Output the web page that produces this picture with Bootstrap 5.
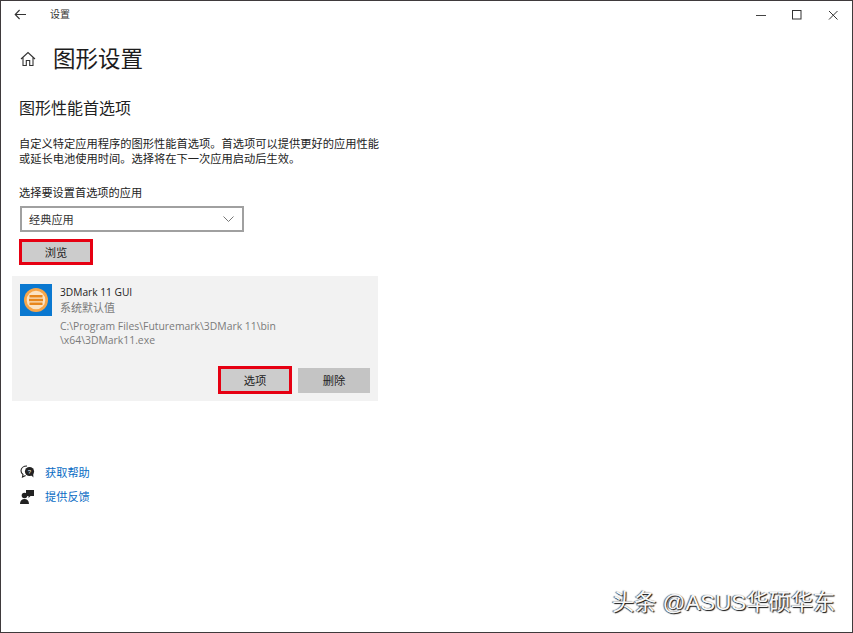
<!DOCTYPE html>
<html lang="zh-CN">
<head>
<meta charset="utf-8">
<title>设置</title>
<link href="https://cdn.jsdelivr.net/npm/bootstrap@5.3.0/dist/css/bootstrap.min.css" rel="stylesheet">
<style>
html,body{height:100%;}
body{font-family:"Open Sans","Noto Sans CJK SC",sans-serif;color:#222;background:#fff;overflow:hidden;font-size:11px;line-height:15px;}
.win{width:853px;height:633px;border:1px solid #3f3a3c;position:relative;background:#fff;}
.tbar{height:27px;}
.backbtn{width:49px;padding-left:13px;}
.tbar-title{font-size:10px;color:#333;}
.ctrls{width:108px;margin-right:1px;}
.ctrls span{width:36px;}
.main{padding-left:18px;width:378px;}
.hd{height:34px;margin-top:14px;margin-left:1px;}
.hd svg{margin-right:17px;}
.ttl{font-size:22.5px;line-height:34px;color:#1c1c1c;font-weight:400;margin:0;}
.sub{font-size:16px;line-height:22px;margin:21px 0 0;font-weight:400;color:#222;}
.desc{margin:17px 0 0;width:361px;font-size:11.25px;}
.lbl{margin:19px 0 0;font-size:11.2px;line-height:16px;}
.combo{width:224px;height:26px;border:2px solid #a0a0a0;margin:5px 0 0 1px;padding:0 8px 0 7px;font-size:11.2px;color:#333;}
.gbtn{background:#ccc;font-size:11.3px;color:#222;}
.mark-red{border:3px solid #e60012;}
.browse{width:74px;height:26px;margin:7px 0 0 0;}
.item{width:366px;height:125px;background:#f2f2f2;margin:11px 0 0 -7px;padding:8px 8px 0 8px;}
.appicon{width:32px;height:32px;flex:none;background:#0a78d0;margin-right:8px;}
.aname{font-size:10.2px;line-height:16px;color:#222;}
.amuted{font-size:10.4px;line-height:14px;color:#7a7a7a;}
.asys{font-size:11px;line-height:16px;margin-bottom:3px;}
.acts{margin-top:19px;}
.opt{width:74px;height:28px;margin-right:6px;}
.del{width:72px;height:25px;background:#c4c4c4;}
.links{margin-top:59px;}
.lnk{height:24.5px;margin-left:1px;}
.lnk svg{width:16px;margin-right:9px;flex:none;}
.lnk span{color:#0a6cc4;font-size:11.2px;}
.wm{position:absolute;left:611px;top:589px;font-family:"Liberation Sans","Noto Sans CJK SC",sans-serif;font-size:22.3px;line-height:26px;color:#f8f8f8;text-shadow:1px 1px 1px #111,-1px 0 1px #555;white-space:nowrap;}
</style>
</head>
<body>
<div class="win">
  <div class="tbar d-flex align-items-center">
    <div class="backbtn d-flex align-items-center">
      <svg width="13" height="11" viewBox="0 0 13 11" fill="none" stroke="#333" stroke-width="1.1"><path d="M12 5.500H1.200M5.600 1 1.200 5.500 5.600 10"/></svg>
    </div>
    <div class="tbar-title">设置</div>
    <div class="ctrls ms-auto d-flex align-items-center">
      <span class="d-flex justify-content-center"><svg width="10" height="10" viewBox="0 0 10 10"><path d="M0 5.500h10" stroke="#444" stroke-width="1"/></svg></span>
      <span class="d-flex justify-content-center"><svg width="10" height="10" viewBox="0 0 10 10"><rect x=".5" y=".5" width="8.500" height="8.500" fill="none" stroke="#333" stroke-width="1"/></svg></span>
      <span class="d-flex justify-content-center"><svg width="10" height="10" viewBox="0 0 10 10"><path d="M1 1l8.500 8.500M9.500 1 1 9.500" stroke="#333" stroke-width="1"/></svg></span>
    </div>
  </div>
  <div class="main">
    <div class="hd d-flex align-items-center">
      <svg width="16" height="16" viewBox="0 0 16 16" fill="none" stroke="#333" stroke-width="1.1"><path d="M1 8 8 1.500 15 8M3 6.500V14.500H6.300V9.500H9.700V14.500H13V6.500"/></svg>
      <h1 class="ttl">图形设置</h1>
    </div>
    <h2 class="sub">图形性能首选项</h2>
    <p class="desc">自定义特定应用程序的图形性能首选项。首选项可以提供更好的应用性能或延长电池使用时间。选择将在下一次应用启动后生效。</p>
    <p class="lbl">选择要设置首选项的应用</p>
    <div class="combo d-flex align-items-center justify-content-between">
      <span>经典应用</span>
      <svg width="11" height="6" viewBox="0 0 11 6" fill="none" stroke="#777" stroke-width="1"><path d="M.5.5l5 5 5-5"/></svg>
    </div>
    <div class="gbtn mark-red browse d-flex align-items-center justify-content-center">浏览</div>
    <div class="item d-flex flex-column">
      <div class="d-flex">
        <div class="appicon d-flex align-items-center justify-content-center">
          <svg width="26" height="26" viewBox="0 0 26 26"><circle cx="13" cy="13" r="12" fill="#f7a649"/><circle cx="13" cy="13" r="9.300" fill="#fbe3c4"/><path d="M6.500 9.200h13M6 13h14M6.500 16.800h13" stroke="#e8871c" stroke-width="2.400"/></svg>
        </div>
        <div>
          <div class="aname">3DMark 11 GUI</div>
          <div class="amuted asys">系统默认值</div>
          <div class="amuted">C:\Program Files\Futuremark\3DMark 11\bin<br>\x64\3DMark11.exe</div>
        </div>
      </div>
      <div class="acts d-flex justify-content-end align-items-center">
        <div class="gbtn mark-red opt d-flex align-items-center justify-content-center">选项</div>
        <div class="gbtn del d-flex align-items-center justify-content-center">删除</div>
      </div>
    </div>
    <div class="links">
      <div class="lnk d-flex align-items-center">
        <svg width="16" height="14" viewBox="0 0 16 14"><path d="M7 1C3.500 1 1 3 1 5.800c0 1.600.8 2.900 2 3.700L2.500 12 5.600 10.400" fill="none" stroke="#222" stroke-width="1.100"/><circle cx="9.500" cy="6.500" r="4.600" fill="#222"/><path d="M11 10l2.400 2.600-.2-4z" fill="#222"/><text x="9.500" y="8.600" font-size="6" fill="#fff" text-anchor="middle" font-family="Liberation Sans">?</text></svg>
        <span>获取帮助</span>
      </div>
      <div class="lnk d-flex align-items-center">
        <svg width="16" height="15" viewBox="0 0 16 15" fill="#222"><path d="M6 1h8v6H10.500L8.500 9V7H6z"/><circle cx="4.500" cy="6.500" r="2.800"/><path d="M0 15c0-3.200 2-5 4.500-5s4.500 1.800 4.500 5z"/></svg>
        <span>提供反馈</span>
      </div>
    </div>
  </div>
  <div class="wm">头条 @ASUS华硕华东</div>
</div>
<script src="https://cdn.jsdelivr.net/npm/bootstrap@5.3.0/dist/js/bootstrap.bundle.min.js"></script>
</body>
</html>
